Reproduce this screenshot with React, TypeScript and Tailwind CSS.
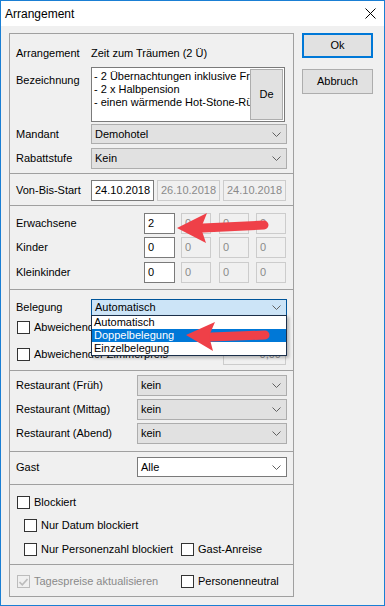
import React from 'react';

type ComboProps = { value: string; variant?: 'gray' | 'white' | 'focus'; wide?: boolean; h?: string };

function Chevron() {
  return (
    <svg width="9" height="5" viewBox="0 0 9 5" className="shrink-0">
      <path d="M0.5 0.5 L4.5 4.5 L8.5 0.5" fill="none" stroke="#606060" strokeWidth="1" />
    </svg>
  );
}

function Combo({ value, variant = 'gray', wide = true, h = 'h-[20px]' }: ComboProps) {
  const look =
    variant === 'gray'
      ? 'bg-[#e1e1e1] border-[#adadad]'
      : variant === 'white'
      ? 'bg-white border-[#7a7a7a]'
      : 'bg-[#cce4f7] border-[#005499]';
  return (
    <div
      className={`${wide ? 'w-[196px]' : 'w-[150px]'} ${h} ${look} border flex items-center justify-between pl-[3px] pr-[5px] text-[11px] text-black`}
    >
      <span>{value}</span>
      <Chevron />
    </div>
  );
}

function Check({ checked, disabled }: { checked?: boolean; disabled?: boolean }) {
  return (
    <div
      className={`w-[13px] h-[13px] shrink-0 border ${disabled ? 'border-[#bcbcbc] bg-[#f0f0f0]' : 'border-[#333333] bg-white'} flex items-center justify-center`}
    >
      {checked && (
        <svg width="9" height="8" viewBox="0 0 9 8">
          <path d="M0.5 4 L3.3 6.8 L8.5 1" fill="none" stroke="#bcbcbc" strokeWidth="1.6" />
        </svg>
      )}
    </div>
  );
}

function Field({ value, disabled, w }: { value: string; disabled?: boolean; w: string }) {
  return (
    <div
      className={`${w} h-[21px] border flex items-center pl-[3px] text-[11px] ${disabled ? 'border-[#cccccc] bg-[#f0f0f0] text-[#8a8a8a]' : 'border-[#7a7a7a] bg-white text-black'}`}
    >
      {value}
    </div>
  );
}

function Label({ children, w = 'w-[75px]' }: { children: React.ReactNode; w?: string }) {
  return <div className={`${w} shrink-0 text-[11px] text-black`}>{children}</div>;
}

function CheckRow({ label, checked, disabled, indent }: { label: string; checked?: boolean; disabled?: boolean; indent?: boolean }) {
  return (
    <div className={`flex items-center h-[13px] gap-[4px] ${indent ? 'ml-[7px]' : ''}`}>
      <Check checked={checked} disabled={disabled} />
      <span className={`text-[11px] leading-[13px] whitespace-nowrap ${disabled ? 'text-[#8a8a8a]' : 'text-black'}`}>{label}</span>
    </div>
  );
}

export default function App() {
  return (
    <div className="relative w-[385px] h-[606px] border border-[#1a7fd4] bg-[#f0f0f0] font-['Liberation_Sans',Arial,sans-serif] overflow-hidden">
      {/* title bar */}
      <div className="h-[25px] bg-white flex items-center justify-between pl-[4px] pr-[8px]">
        <span className="text-[12px] text-black">Arrangement</span>
        <svg width="11" height="11" viewBox="0 0 11 11">
          <path d="M0.5 0.5 L10.5 10.5 M10.5 0.5 L0.5 10.5" stroke="#000" strokeWidth="1" />
        </svg>
      </div>

      <div className="flex pl-[8px] pt-[7px]">
        {/* main panel */}
        <div className="w-[285px] border border-[#a0a0a0] flex flex-col">
          {/* section 1 */}
          <div className="h-[139px] pl-[6px] pt-[12px]">
            <div className="flex items-center h-[14px]">
              <Label>Arrangement</Label>
              <span className="text-[11px] text-black">Zeit zum Träumen (2 Ü)</span>
            </div>
            <div className="flex mt-[7px]">
              <Label>
                <div className="pt-[5px]">Bezeichnung</div>
              </Label>
              <div className="w-[194px] h-[55px] border border-[#7a7a7a] bg-white flex">
                <div className="flex-1 overflow-hidden pl-[2px] pt-[2px] text-[11px] leading-[13px] text-black whitespace-nowrap">
                  <div>- 2 Übernachtungen inklusive Frühstück</div>
                  <div>- 2 x Halbpension</div>
                  <div>- einen wärmende Hot-Stone-Rückenmassage</div>
                </div>
                <div className="w-[33px] h-[51px] mt-[1px] mr-[1px] bg-[#e1e1e1] border border-[#adadad] flex items-center justify-center text-[11px] text-black">
                  De
                </div>
              </div>
            </div>
            <div className="flex items-center mt-[2px]">
              <Label>Mandant</Label>
              <Combo value="Demohotel" />
            </div>
            <div className="flex items-center mt-[4px]">
              <Label>Rabattstufe</Label>
              <Combo value="Kein" h="h-[21px]" />
            </div>
          </div>

          {/* section 2 */}
          <div className="h-[32px] border-t border-[#a0a0a0] pl-[6px] pt-[6px]">
            <div className="flex items-center">
              <Label>Von-Bis-Start</Label>
              <div className="flex gap-[3px]">
                <Field value="24.10.2018" w="w-[63px]" />
                <Field value="26.10.2018" w="w-[63px]" disabled />
                <Field value="24.10.2018" w="w-[63px]" disabled />
              </div>
            </div>
          </div>

          {/* section 3 */}
          <div className="h-[84px] border-t border-[#a0a0a0] pl-[6px] pt-[7px] flex flex-col">
            {[
              ['Erwachsene', '2', 'mt-0'],
              ['Kinder', '0', 'mt-[3px]'],
              ['Kleinkinder', '0', 'mt-[4px]'],
            ].map(([l, v, m]) => (
              <div key={l} className={`flex items-center ${m}`}>
                <Label w="w-[128px]">{l}</Label>
                <Field value={v} w="w-[31px]" />
                <div className="ml-[6px]">
                  <Field value="0" w="w-[30px]" disabled />
                </div>
                <div className="ml-[8px]">
                  <Field value="0" w="w-[30px]" disabled />
                </div>
                <div className="ml-[7px]">
                  <Field value="0" w="w-[30px]" disabled />
                </div>
              </div>
            ))}
          </div>

          {/* section 4 */}
          <div className="relative h-[81px] border-t border-[#a0a0a0] pl-[6px] pt-[9px]">
            <div className="flex items-center">
              <Label>Belegung</Label>
              <Combo value="Automatisch" variant="focus" h="h-[17px]" />
            </div>
            <div className="flex items-center mt-[5px] ml-[1px]">
              <CheckRow label="Abweichende Personenzahl" />
            </div>
            <div className="flex items-center justify-between mt-[14px] ml-[1px] pr-[7px] h-[13px]">
              <CheckRow label="Abweichender Zimmerpreis" />
              <div className="w-[63px] h-[20px] shrink-0 border border-[#cccccc] bg-[#f0f0f0] flex items-center justify-end pr-[4px] text-[11px] text-[#8a8a8a]">
                0,00
              </div>
            </div>
            {/* open dropdown list */}
            <div className="absolute left-[81px] top-[25px] w-[196px] border border-[#1b2f4a] bg-white text-[11px] leading-[13px] shadow-[2px_2px_3px_rgba(0,0,0,0.25)]">
              <div className="pl-[2px] text-black">Automatisch</div>
              <div className="pl-[2px] bg-[#0078d7] text-white">Doppelbelegung</div>
              <div className="pl-[2px] text-black">Einzelbelegung</div>
            </div>
          </div>

          {/* section 5 */}
          <div className="h-[81px] border-t border-[#a0a0a0] pl-[6px] pt-[4px] flex flex-col gap-[3px]">
            {['Restaurant (Früh)', 'Restaurant (Mittag)', 'Restaurant (Abend)'].map((l) => (
              <div key={l} className="flex items-center">
                <Label w="w-[121px]">{l}</Label>
                <Combo value="kein" wide={false} h="h-[21px]" />
              </div>
            ))}
          </div>

          {/* section 6 */}
          <div className="h-[33px] border-t border-[#a0a0a0] pl-[6px] pt-[5px]">
            <div className="flex items-center">
              <Label w="w-[121px]">Gast</Label>
              <Combo value="Alle" variant="white" wide={false} />
            </div>
          </div>

          {/* section 7 */}
          <div className="h-[80px] border-t border-[#a0a0a0] pl-[7px] pt-[11px] flex flex-col">
            <CheckRow label="Blockiert" />
            <div className="mt-[10px]">
              <CheckRow label="Nur Datum blockiert" indent />
            </div>
            <div className="mt-[11px] flex items-center">
              <div className="w-[164px]">
                <CheckRow label="Nur Personenzahl blockiert" indent />
              </div>
              <CheckRow label="Gast-Anreise" />
            </div>
          </div>

          {/* section 8 */}
          <div className="h-[32px] border-t border-[#a0a0a0] pl-[7px] pt-[10px]">
            <div className="flex items-center">
              <div className="w-[164px]">
                <CheckRow label="Tagespreise aktualisieren" checked disabled />
              </div>
              <CheckRow label="Personenneutral" />
            </div>
          </div>
        </div>

        {/* buttons */}
        <div className="ml-[8px] flex flex-col gap-[11px]">
          <div className="w-[71px] h-[25px] border-2 border-[#0078d7] bg-[#e1e1e1] flex items-center justify-center text-[11px] text-black">
            Ok
          </div>
          <div className="w-[71px] h-[25px] border border-[#adadad] bg-[#e1e1e1] flex items-center justify-center text-[11px] text-black">
            Abbruch
          </div>
        </div>
      </div>

      {/* annotation arrows */}
      <svg className="absolute left-0 top-0 pointer-events-none" width="385" height="606" viewBox="0 0 385 606">
        <g fill="#ef4048" stroke="none">
          <path d="M202 227 L263 224" stroke="#ef4048" strokeWidth="9" strokeLinecap="round" />
          <polygon points="176,227 206,212 200,227 205,242" />
          <path d="M210 336 L264 334" stroke="#ef4048" strokeWidth="9" strokeLinecap="round" />
          <polygon points="185,334 214,321 208,335 212,350" />
        </g>
      </svg>
    </div>
  );
}
